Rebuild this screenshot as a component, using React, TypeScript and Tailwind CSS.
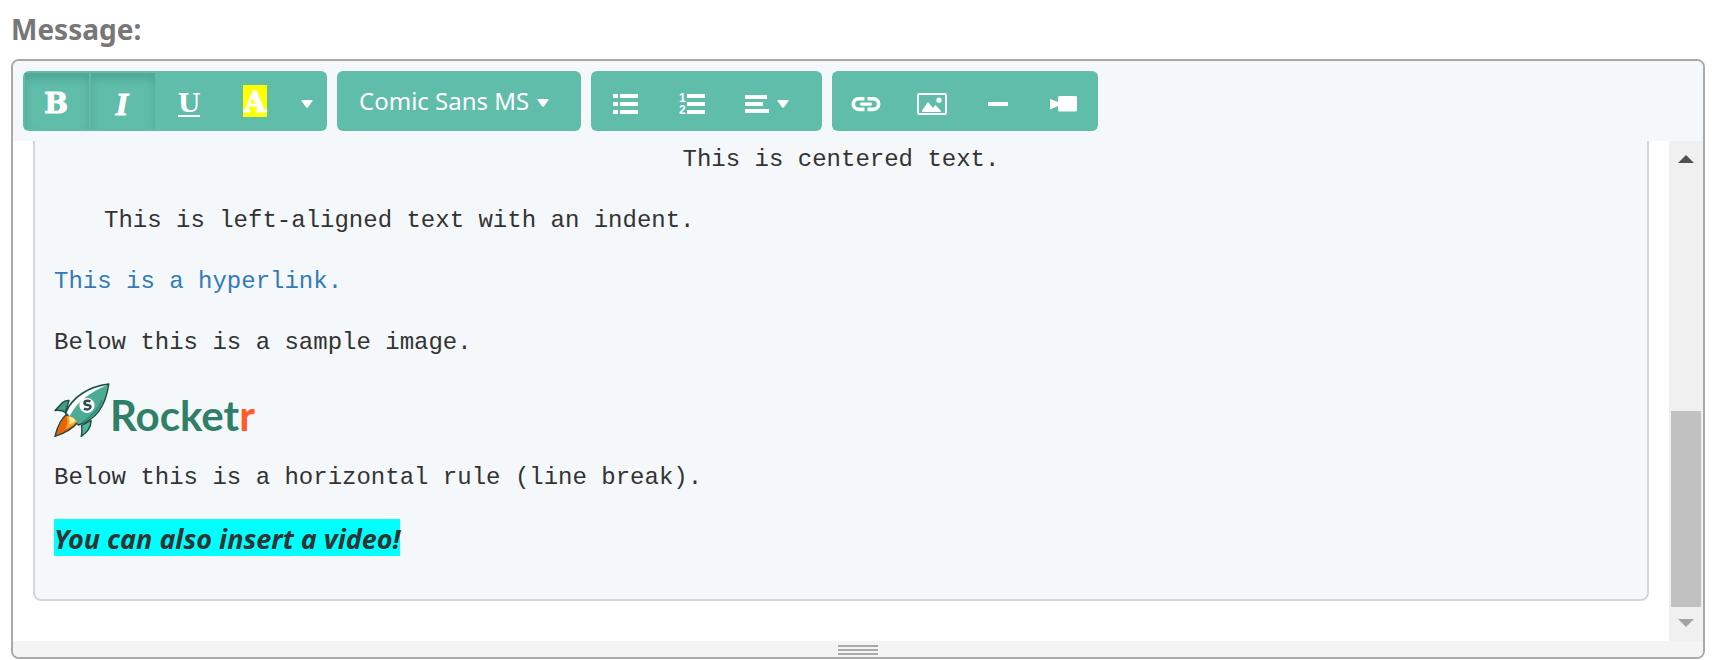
import React, { useState } from 'react';

const FONTS = ['Comic Sans MS', 'Arial', 'Courier New', 'Helvetica', 'Tahoma', 'Verdana'];

type ToolButtonProps = {
  label: string;
  active?: boolean;
  className?: string;
  onClick?: () => void;
  children: React.ReactNode;
};

const ToolButton: React.FC<ToolButtonProps> = ({ label, active, className, onClick, children }) => (
  <button
    type="button"
    aria-label={label}
    title={label}
    aria-pressed={active}
    onClick={onClick}
    className={`flex h-14 items-center justify-center border-x border-[#5fbdaa] pt-1.5 text-white ${
      active ? 'shadow-[inset_0_6px_10px_rgba(0,0,0,0.13)]' : ''
    } ${className ?? 'w-[66px]'}`}
  >
    {children}
  </button>
);

const ToolGroup: React.FC<{ children: React.ReactNode }> = ({ children }) => (
  <div className="flex items-center rounded-md bg-[#5fbdaa] px-px py-0.5">{children}</div>
);

const Caret: React.FC = () => (
  <svg width="12" height="8" viewBox="0 0 12 8" fill="currentColor" aria-hidden="true">
    <path d="M1 0h10q1 0 .5 1L6.8 7.4q-.8.9-1.6 0L.5 1Q0 0 1 0z" />
  </svg>
);

const BulletListIcon: React.FC = () => (
  <svg width="25" height="20" viewBox="0 0 25 20" fill="currentColor" aria-hidden="true">
    <path d="M0 0h5v4H0zM7 0h18v4H7zM0 8h5v4H0zM7 8h18v4H7zM0 16h5v4H0zM7 16h18v4H7z" />
  </svg>
);

const NumberListIcon: React.FC = () => (
  <svg width="26" height="28" viewBox="0 0 26 28" fill="currentColor" aria-hidden="true">
    <path d="M8 4h18v4H8zM8 12h18v4H8zM8 20h18v4H8z" />
    <text x="0" y="12" fontSize="12" fontWeight="700" fontFamily="Liberation Sans, sans-serif">1</text>
    <text x="0" y="24" fontSize="12" fontWeight="700" fontFamily="Liberation Sans, sans-serif">2</text>
  </svg>
);

const AlignIcon: React.FC = () => (
  <svg width="24" height="18" viewBox="0 0 24 18" fill="currentColor" aria-hidden="true">
    <path d="M0 0h22v4H0zM0 7h18v4H0zM0 14h24v4H0z" />
  </svg>
);

const LinkIcon: React.FC = () => (
  <svg width="30" height="16" viewBox="0 0 30 16" fill="none" stroke="currentColor" strokeWidth="3.6" aria-hidden="true">
    <path d="M13.5 2.8H7.6a5.3 5.3 0 0 0 0 10.6h5.9M16.5 2.8h5.9a5.3 5.3 0 0 1 0 10.6h-5.9" />
    <path d="M10.5 8.1h9" strokeLinecap="round" strokeWidth="3.4" />
  </svg>
);

const PictureIcon: React.FC = () => (
  <svg width="30" height="22" viewBox="0 0 30 22" fill="currentColor" aria-hidden="true">
    <rect x="1" y="1" width="28" height="20" rx="1" fill="none" stroke="currentColor" strokeWidth="2" />
    <circle cx="22" cy="7.2" r="2.6" />
    <path d="M5 19v-1.5l6-8.5 5 6 2.5-3 5.5 6v1z" />
  </svg>
);

const MinusIcon: React.FC = () => (
  <svg width="20" height="4" viewBox="0 0 20 4" fill="currentColor" aria-hidden="true">
    <path d="M0 0h20v4H0z" />
  </svg>
);

const VideoIcon: React.FC = () => (
  <svg width="28" height="16" viewBox="0 0 28 16" fill="currentColor" aria-hidden="true">
    <rect x="8" y="0" width="19" height="15.5" rx="1.5" />
    <path d="M0 3 8 6v4L0 13.500z" />
  </svg>
);

const Rocket: React.FC = () => (
  <svg width="56" height="54" viewBox="0 0 56 54" className="shrink-0" aria-hidden="true">
    <g stroke="#23493f" strokeWidth="1.4" strokeLinejoin="round">
      <path d="M15 17.500Q11 17 8 20L1 27.500q6-.8 10.500 1.800z" fill="#3f9c86" />
      <path d="M37 37.500q.5 9-9.800 16 1.200-5 .3-11z" fill="#4fb79f" />
      <path d="M13 31Q5 37 1 53.300 17 48 23.500 39.500z" fill="#e8630c" />
      <path d="M54.800 1C35 3.500 17.500 13.500 11.500 30.500q5.500 7 13 11.500Q50 35 54.800 1z" fill="#4bab95" />
    </g>
    <path d="M53 2C36 5 20 13.500 12.800 29.500l3 3.500Q25 14 53 2z" fill="#fff" />
    <path d="M12.500 33q8 0 10.500 6-5 5-12 7.500 4-6 1.500-13.500z" fill="#ffa51f" />
    <path d="M14.500 33.500q5.500.5 7 4.500-3.500 3-6.500 3.500 1.500-4-.5-8z" fill="#ffe9a0" />
    <circle cx="33" cy="22.500" r="7.600" fill="#fff" />
    <path
      d="M36.500 18.500c-3-1.500-6.500-.5-6 2s6.500.7 6 3.500-4 3-6.500 1.500"
      fill="none"
      stroke="#2c4c46"
      strokeWidth="2.400"
    />
    <path d="M48 17Q43 31 28 39.500" fill="none" stroke="#2f8a74" strokeWidth="1.500" />
  </svg>
);

export default function App() {
  const [bold, setBold] = useState(true);
  const [italic, setItalic] = useState(true);
  const [font, setFont] = useState(FONTS[0]);

  return (
    <main className="bg-white pt-[9px] pr-[22px] pl-[11px] font-['Noto_Sans',sans-serif]">
      <h2 id="message-label" className="mb-2.5 text-[28px] leading-10 font-bold text-[#777]">
        Message:
      </h2>

      <div className="overflow-hidden rounded-lg border-2 border-[#a9a9a9]">
        <div role="toolbar" aria-label="Formatting" className="flex flex-wrap gap-2.5 bg-[#f4f8fb] p-2.5 font-normal">
          <ToolGroup>
            <ToolButton label="Bold" active={bold} onClick={() => setBold(!bold)}>
              <span className="pr-0.5 font-['DejaVu_Serif',serif] text-[28px] leading-7 font-bold [-webkit-text-stroke:1px_white]">B</span>
            </ToolButton>
            <ToolButton label="Italic" active={italic} onClick={() => setItalic(!italic)}>
              <span className="pr-0.5 font-['Liberation_Serif',serif] text-[32px] leading-8 font-bold italic [-webkit-text-stroke:1px_white]">I</span>
            </ToolButton>
            <ToolButton label="Underline">
              <span className="border-b-2 border-white font-['DejaVu_Serif',serif] text-[26px] leading-6 font-bold">U</span>
            </ToolButton>
            <ToolButton label="Highlight color">
              <span className="mb-1.5 w-6 bg-[#ff0] pt-1 text-center font-['DejaVu_Serif',serif] text-[28px] leading-7 font-bold [-webkit-text-stroke:1px_white]">A</span>
            </ToolButton>
            <ToolButton label="More colors" className="w-[38px]">
              <Caret />
            </ToolButton>
          </ToolGroup>

          <div className="relative flex items-center rounded-md bg-[#5fbdaa] text-white">
            <select
              aria-label="Font family"
              value={font}
              onChange={e => setFont(e.target.value)}
              className="h-[60px] w-[244px] appearance-none bg-transparent pl-[22px] text-2xl text-white"
            >
              {FONTS.map(f => (
                <option key={f} className="text-black">{f}</option>
              ))}
            </select>
            <span className="pointer-events-none absolute right-8 pt-1">
              <Caret />
            </span>
          </div>

          <ToolGroup>
            <ToolButton label="Unordered list" className="w-[67px]"><BulletListIcon /></ToolButton>
            <ToolButton label="Ordered list"><NumberListIcon /></ToolButton>
            <ToolButton label="Paragraph" className="w-24 gap-2 pr-3">
              <AlignIcon />
              <Caret />
            </ToolButton>
          </ToolGroup>

          <ToolGroup>
            <ToolButton label="Link"><LinkIcon /></ToolButton>
            <ToolButton label="Picture"><PictureIcon /></ToolButton>
            <ToolButton label="Horizontal rule"><MinusIcon /></ToolButton>
            <ToolButton label="Video"><VideoIcon /></ToolButton>
          </ToolGroup>
        </div>

        <div className="flex h-[500px]">
          {/* scrolled to the end, so the top of the message is cut off */}
          <div className="flex flex-1 flex-col justify-end overflow-hidden px-5 pb-10">
            <div
              aria-labelledby="message-label"
              className="flex flex-col gap-5 rounded-lg border-2 border-[#d2d6da] bg-[#f4f8fb] px-[19px] pt-5 pb-10 font-['Liberation_Mono',monospace] text-2xl leading-[41px] text-[#333]"
            >
              <p className="text-center">This is centered text.</p>
              <p className="pl-[50px]">This is left-aligned text with an indent.</p>
              <p><a href="#" className="text-[#337ab7]">This is a hyperlink.</a></p>
              <p>Below this is a sample image.</p>
              <div className="flex h-[54px]">
                <Rocket />
                <span className="pt-3 font-['Lato',sans-serif] text-[42px] leading-[41px] font-bold text-[#2f7f69]">
                  Rocket<span className="text-[#ff5c28]">r</span>
                </span>
              </div>
              <p>Below this is a horizontal rule (line break).</p>
              <p className="flex pt-px pb-[3px]">
                <span className="bg-[#0ff] pt-0.5 font-['Comic_Sans_MS','Noto_Sans',sans-serif] text-[27px] leading-[35px] font-bold italic">
                  You can also insert a video!
                </span>
              </p>
            </div>
          </div>

          <div className="flex w-[34px] flex-col items-center bg-[#f0f0f0] py-3.5 text-[#505050]">
            <svg width="16" height="8" viewBox="0 0 16 8" fill="currentColor" aria-hidden="true">
              <path d="M0 8 8 0l8 8z" />
            </svg>
            <div className="mt-auto mb-3 h-[196px] w-[30px] bg-[#c1c1c1]" />
            <svg width="16" height="8" viewBox="0 0 16 8" fill="#a3a3a3" aria-hidden="true">
              <path d="M0 0h16L8 8z" />
            </svg>
          </div>
        </div>

        <div className="flex h-4 cursor-ns-resize flex-col items-center gap-0.5 bg-[#f4f4f4] pt-1">
          <div className="h-0.5 w-10 bg-[#a9a9a9]" />
          <div className="h-0.5 w-10 bg-[#a9a9a9]" />
          <div className="h-0.5 w-10 bg-[#a9a9a9]" />
        </div>
      </div>
    </main>
  );
}
